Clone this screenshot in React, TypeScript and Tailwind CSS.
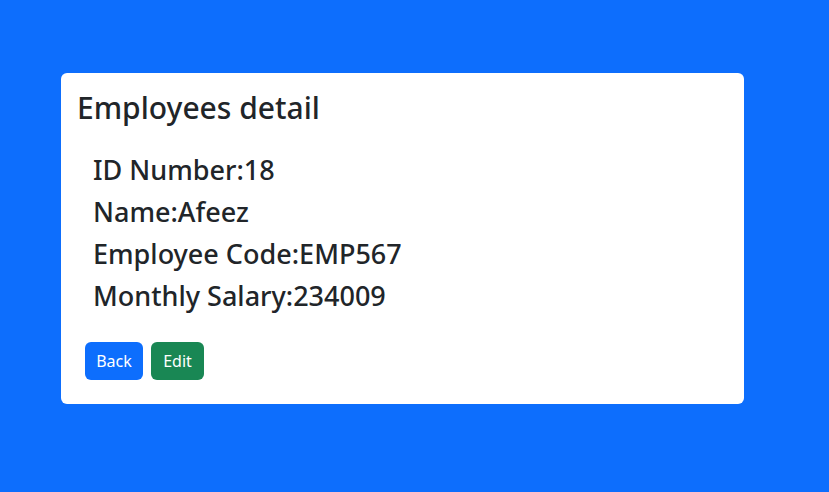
export default function App() {
  const details = [
    { label: 'ID Number', value: '18' },
    { label: 'Name', value: 'Afeez' },
    { label: 'Employee Code', value: 'EMP567' },
    { label: 'Monthly Salary', value: '234009' },
  ];

  return (
    <div className="min-h-[492px] bg-[#0d6efd] pt-[73px] pl-[61px] font-['Noto_Sans',sans-serif] text-[#212529]">
      <div className="w-[683px] rounded-md bg-white p-4">
        <h2 className="mb-2 text-[30px] leading-[38px] font-medium">Employees detail</h2>
        <ul className="mt-[26px] mb-[21px] pl-4">
          {details.map((d) => (
            <li key={d.label}>
              <h3 className="mb-2 text-[27px] leading-[34px] font-medium">
                {d.label}:{d.value}
              </h3>
            </li>
          ))}
        </ul>
        <div className="flex gap-2 p-2">
          <button className="h-[38px] w-[58px] rounded-md bg-[#0d6efd] text-base text-white">Back</button>
          <button className="h-[38px] w-[53px] rounded-md bg-[#198754] text-base text-white">Edit</button>
        </div>
      </div>
    </div>
  );
}
